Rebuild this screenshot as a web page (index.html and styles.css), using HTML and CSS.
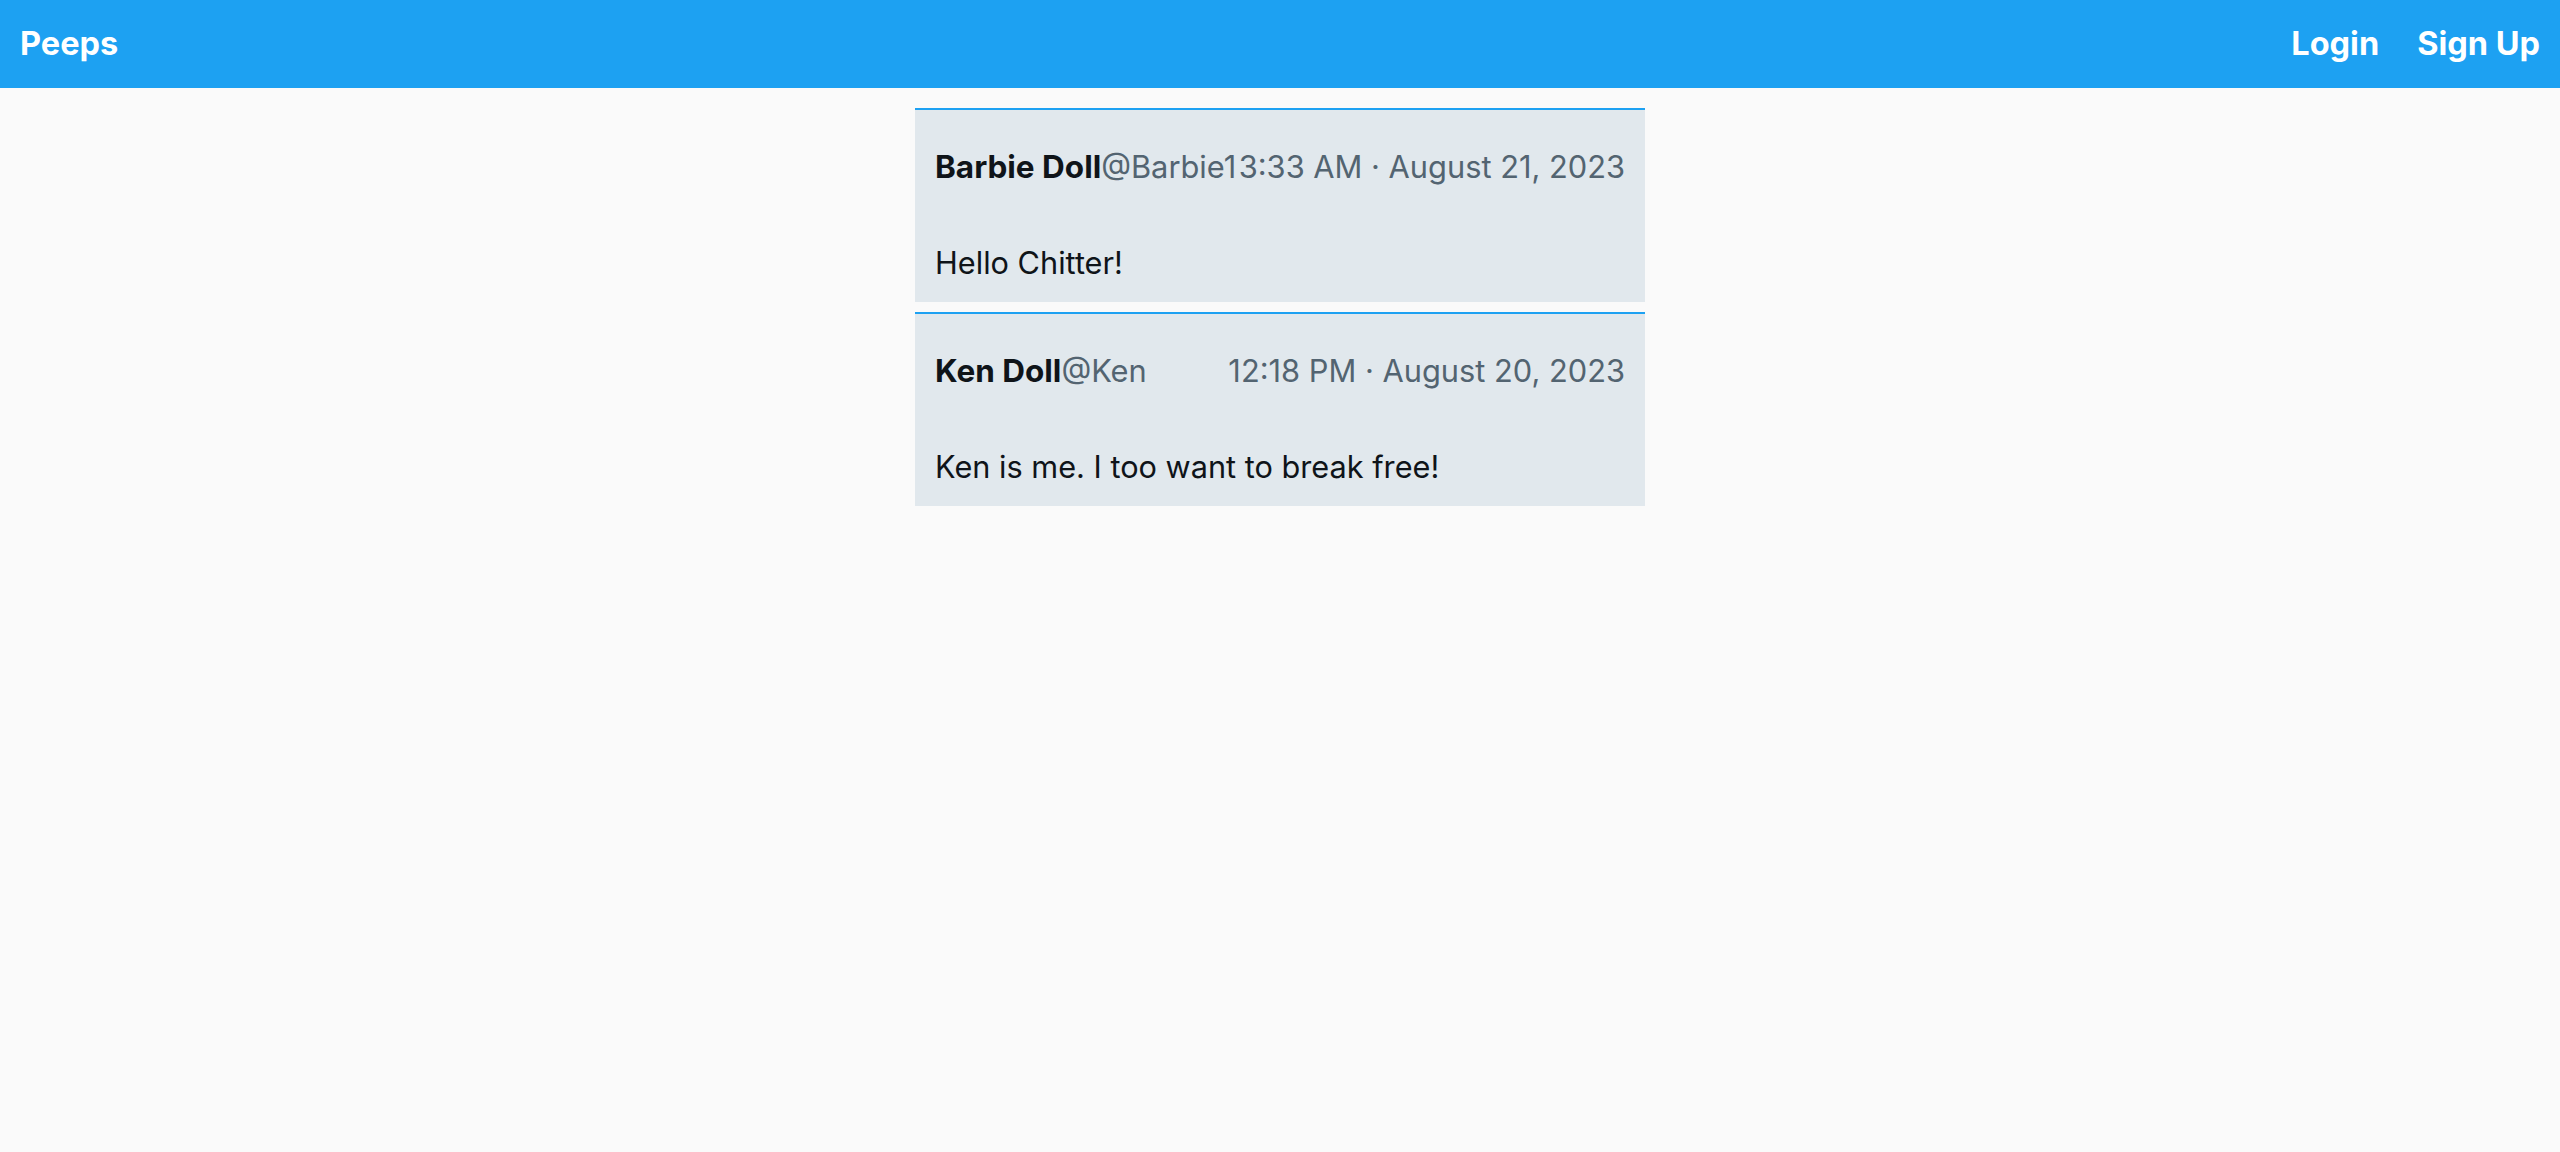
FILE: index.html
```html
<!DOCTYPE html>
<html lang="en">
<head>
<meta charset="utf-8">
<title>Chitter</title>
<link rel="stylesheet" href="styles.css">
</head>
<body>
<header class="topbar">
  <a class="brand" href="#">Peeps</a>
  <nav class="nav">
    <a class="nav-link" href="#">Login</a>
    <a class="nav-link" href="#">Sign Up</a>
  </nav>
</header>
<main class="feed">
  <article class="peep">
    <div class="peep-head">
      <div class="author"><span class="name">Barbie Doll</span><span class="handle">@Barbie1</span></div>
      <span class="time">3:33 AM · August 21, 2023</span>
    </div>
    <p class="peep-body">Hello Chitter!</p>
  </article>
  <article class="peep">
    <div class="peep-head">
      <div class="author"><span class="name">Ken Doll</span><span class="handle">@Ken</span></div>
      <span class="time">12:18 PM · August 20, 2023</span>
    </div>
    <p class="peep-body">Ken is me. I too want to break free!</p>
  </article>
</main>
</body>
</html>
```
FILE: styles.css
```css
* { box-sizing: border-box; }
html, body { margin: 0; padding: 0; }
body {
  background: #fafafa;
  font-family: Inter, "Noto Sans", "Liberation Sans", sans-serif;
  color: #0f1419;
}
.topbar {
  height: 88px;
  background: #1da1f2;
  display: flex;
  align-items: center;
  justify-content: space-between;
  padding: 0 20px;
}
.brand, .nav-link {
  color: #ffffff;
  font-weight: 700;
  font-size: 32.5px;
  line-height: 40px;
  text-decoration: none;
}
.nav { display: flex; gap: 38px; }
.feed {
  width: 730px;
  margin: 20px auto 0;
  display: flex;
  flex-direction: column;
  gap: 10px;
}
.peep {
  background: #e1e8ed;
  border-top: 2px solid #1da1f2;
  padding: 32px 20px 17px;
}
.peep-head {
  height: 48px;
  display: flex;
  align-items: center;
  justify-content: space-between;
  font-size: 30.8px;
  white-space: nowrap;
}
.name { font-weight: 700; font-size: 31.5px; color: #0f1419; }
.handle, .time { color: #536471; }
.peep-body {
  margin: 50px 0 0;
  font-size: 30.7px;
  line-height: 45px;
  color: #0f1419;
}
```
